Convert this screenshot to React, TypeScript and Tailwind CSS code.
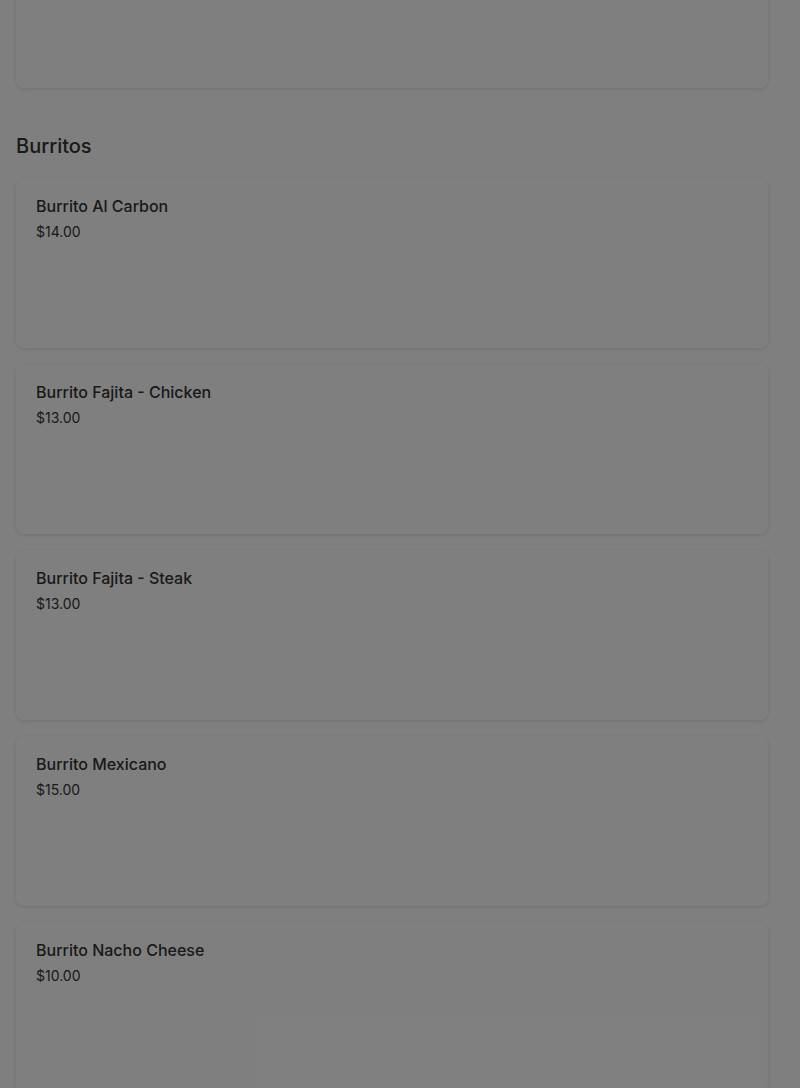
import React from "react";

const items = [
  { name: "Burrito Al Carbon", price: "$14.00" },
  { name: "Burrito Fajita - Chicken", price: "$13.00" },
  { name: "Burrito Fajita - Steak", price: "$13.00" },
  { name: "Burrito Mexicano", price: "$15.00" },
  { name: "Burrito Nacho Cheese", price: "$10.00" },
];

function Card({ name, price }: { name: string; price: string }) {
  return (
    <div className="h-[170px] rounded-lg bg-white px-5 pt-4 shadow-[0_1px_4px_rgba(0,0,0,0.12)]">
      <div className="text-[16px] font-medium leading-6 text-[#333]">{name}</div>
      <div className="mt-[4px] text-[14px] leading-5 text-[#333]">{price}</div>
    </div>
  );
}

export default function App() {
  return (
    <div
      className="relative h-[1088px] overflow-hidden bg-white"
      style={{ fontFamily: "Inter, 'Noto Sans', sans-serif" }}
    >
      <div className="pl-4 pr-8">
        <div className="-mt-[82px] h-[170px] rounded-lg bg-white shadow-[0_1px_4px_rgba(0,0,0,0.12)]" />
        <h2 className="mt-[44px] mb-[18px] text-[20px] font-medium leading-7 text-[#333]">
          Burritos
        </h2>
        <div className="flex flex-col gap-4">
          {items.map((it) => (
            <Card key={it.name} name={it.name} price={it.price} />
          ))}
        </div>
      </div>
      <div className="absolute inset-0 bg-black/50" />
    </div>
  );
}
